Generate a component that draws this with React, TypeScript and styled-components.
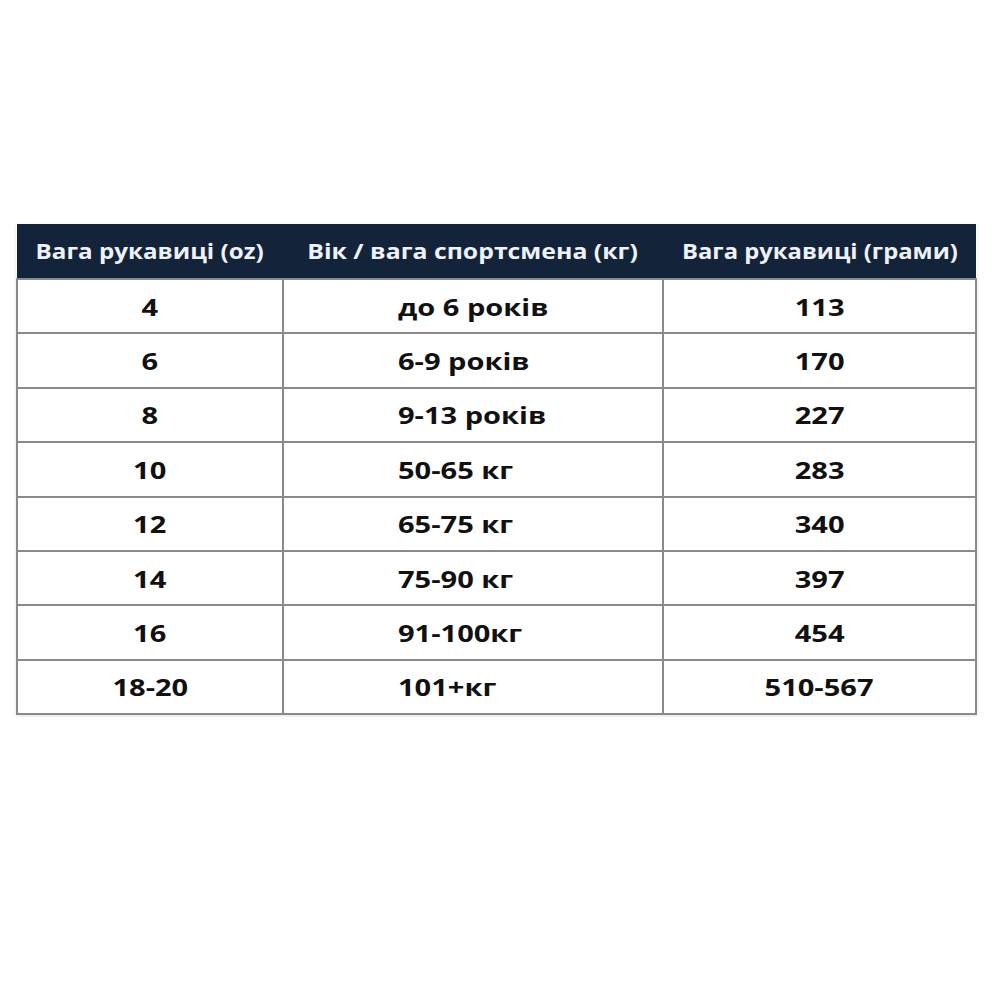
import React from "react";
import styled, { createGlobalStyle } from "styled-components";

const GlobalStyle = createGlobalStyle`
  html, body {
    margin: 0;
    padding: 0;
    background: #fff;
  }
  body {
    font-family: "Open Sans", "Noto Sans", sans-serif;
  }
`;

const Page = styled.div`
  width: 1000px;
  height: 1000px;
  padding: 224px 0 0 16px;
  box-sizing: border-box;
`;

const Table = styled.table`
  width: 959px;
  border-collapse: collapse;
  table-layout: fixed;
  box-shadow: 0 1px 3px rgba(0, 0, 0, 0.12);
`;

const HeadCell = styled.th<{ $w: number }>`
  width: ${(p) => p.$w}px;
  height: 54px;
  padding: 0;
  background: #13233a;
  color: #eef2f7;
  font-size: 20.5px;
  font-weight: 700;
  text-align: center;
  white-space: nowrap;
  border: none;
`;

const Row = styled.tr`
  height: 54.4px;
`;

const Cell = styled.td<{ $align?: "left" | "center"; $pad?: number }>`
  padding: 0 0 0 ${(p) => p.$pad ?? 0}px;
  border: 2px solid #8a8a8a;
  color: #111;
  font-size: 24px;
  font-weight: 700;
  text-align: ${(p) => p.$align ?? "center"};
  white-space: nowrap;
`;

/* the source picture is stretched sideways; widen the glyphs to match */
const Wide = styled.span<{ $origin?: "left" | "center"; $sx?: number }>`
  display: inline-block;
  transform: scaleX(${(p) => p.$sx ?? 1.21});
  transform-origin: ${(p) => p.$origin ?? "center"} center;
`;

const rows: [string, string, string][] = [
  ["4", "до 6 років", "113"],
  ["6", "6-9 років", "170"],
  ["8", "9-13 років", "227"],
  ["10", "50-65 кг", "283"],
  ["12", "65-75 кг", "340"],
  ["14", "75-90 кг", "397"],
  ["16", "91-100кг", "454"],
  ["18-20", "101+кг", "510-567"],
];

export default function App() {
  return (
    <>
      <GlobalStyle />
      <Page>
        <Table>
          <thead>
            <tr>
              <HeadCell $w={266}>
                <Wide $sx={1.18}>Вага рукавиці (oz)</Wide>
              </HeadCell>
              <HeadCell $w={380}>
                <Wide $sx={1.21}>Вік / вага спортсмена (кг)</Wide>
              </HeadCell>
              <HeadCell $w={313}>
                <Wide $sx={1.16}>Вага рукавиці (грами)</Wide>
              </HeadCell>
            </tr>
          </thead>
          <tbody>
            {rows.map(([oz, who, g]) => (
              <Row key={oz}>
                <Cell>
                  <Wide>{oz}</Wide>
                </Cell>
                <Cell $align="left" $pad={114}>
                  <Wide $origin="left">{who}</Wide>
                </Cell>
                <Cell>
                  <Wide>{g}</Wide>
                </Cell>
              </Row>
            ))}
          </tbody>
        </Table>
      </Page>
    </>
  );
}
